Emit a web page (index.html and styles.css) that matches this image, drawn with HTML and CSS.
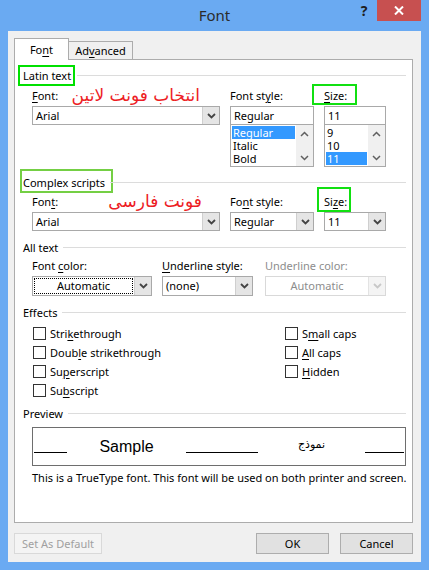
FILE: index.html
```html
<!DOCTYPE html>
<html lang="en">
<head>
    <meta charset="UTF-8">
    <title>Font</title>
    <link rel="stylesheet" href="styles.css">
</head>
<body>
<div class="window">
    <div class="titlebar">
        <span></span>
        <span class="title">Font</span>
        <div class="controls">
            <span class="help">?</span>
            <span class="close">
                <svg width="10" height="9" viewBox="0 0 10 9"><path d="M1 0.5l8 8M9 0.5l-8 8" stroke="#fff" stroke-width="2"/></svg>
            </span>
        </div>
    </div>

    <div class="client">
        <div class="tabs">
            <div class="tab active">Fo<u>n</u>t</div>
            <div class="tab">Ad<u>v</u>anced</div>
        </div>

        <div class="panel">
            <!-- Latin text -->
            <div class="group-head head-latin">
                <span class="mark mark-latin">Latin text</span><span class="rule"></span>
            </div>
            <div class="fields fields-latin">
                <div class="field">
                    <div class="label"><span><u>F</u>ont:</span><span class="note note-latin">انتخاب فونت لاتین</span></div>
                    <div class="combo">
                        <span class="value">Arial</span>
                        <span class="drop"><svg width="9" height="6" viewBox="0 0 9 6"><path d="M1 1l3.5 3.5L8 1" fill="none" stroke="#444" stroke-width="1.8"/></svg></span>
                    </div>
                </div>
                <div class="field">
                    <div class="label"><span>Font st<u>y</u>le:</span></div>
                    <div class="textbox">Regular</div>
                    <div class="listbox">
                        <div class="items">
                            <div class="item selected">Regular</div>
                            <div class="item">Italic</div>
                            <div class="item">Bold</div>
                        </div>
                        <div class="scrollbar">
                            <svg width="9" height="6" viewBox="0 0 9 6"><path d="M1 5l3.5-3.5L8 5" fill="none" stroke="#606060" stroke-width="1.5"/></svg>
                            <svg width="9" height="6" viewBox="0 0 9 6"><path d="M1 1l3.5 3.5L8 1" fill="none" stroke="#606060" stroke-width="1.5"/></svg>
                        </div>
                    </div>
                </div>
                <div class="field">
                    <div class="label"><span class="mark mark-size1"><u>S</u>ize:</span></div>
                    <div class="textbox">11</div>
                    <div class="listbox">
                        <div class="items">
                            <div class="item">9</div>
                            <div class="item">10</div>
                            <div class="item selected">11</div>
                        </div>
                        <div class="scrollbar">
                            <svg width="9" height="6" viewBox="0 0 9 6"><path d="M1 5l3.5-3.5L8 5" fill="none" stroke="#606060" stroke-width="1.5"/></svg>
                            <svg width="9" height="6" viewBox="0 0 9 6"><path d="M1 1l3.5 3.5L8 1" fill="none" stroke="#606060" stroke-width="1.5"/></svg>
                        </div>
                    </div>
                </div>
            </div>

            <!-- Complex scripts -->
            <div class="group-head head-complex">
                <span class="mark mark-complex">Complex scripts</span><span class="rule"></span>
            </div>
            <div class="fields fields-complex">
                <div class="field">
                    <div class="label"><span>Fon<u>t</u>:</span><span class="note note-complex">فونت فارسی</span></div>
                    <div class="combo">
                        <span class="value">Arial</span>
                        <span class="drop"><svg width="9" height="6" viewBox="0 0 9 6"><path d="M1 1l3.5 3.5L8 1" fill="none" stroke="#444" stroke-width="1.8"/></svg></span>
                    </div>
                </div>
                <div class="field">
                    <div class="label"><span>Fo<u>n</u>t style:</span></div>
                    <div class="combo">
                        <span class="value">Regular</span>
                        <span class="drop"><svg width="9" height="6" viewBox="0 0 9 6"><path d="M1 1l3.5 3.5L8 1" fill="none" stroke="#444" stroke-width="1.8"/></svg></span>
                    </div>
                </div>
                <div class="field">
                    <div class="label"><span class="mark mark-size2">Si<u>z</u>e:</span></div>
                    <div class="combo">
                        <span class="value">11</span>
                        <span class="drop"><svg width="9" height="6" viewBox="0 0 9 6"><path d="M1 1l3.5 3.5L8 1" fill="none" stroke="#444" stroke-width="1.8"/></svg></span>
                    </div>
                </div>
            </div>

            <!-- All text -->
            <div class="group-head head-all">
                <span>All text</span><span class="rule"></span>
            </div>
            <div class="fields fields-all">
                <div class="field">
                    <div class="label"><span>Font <u>c</u>olor:</span></div>
                    <div class="combo combo-color">
                        <span class="value focus">Automatic</span>
                        <span class="drop"><svg width="9" height="6" viewBox="0 0 9 6"><path d="M1 1l3.5 3.5L8 1" fill="none" stroke="#444" stroke-width="1.8"/></svg></span>
                    </div>
                </div>
                <div class="field">
                    <div class="label"><span><u>U</u>nderline style:</span></div>
                    <div class="combo combo-uline">
                        <span class="value">(none)</span>
                        <span class="drop"><svg width="9" height="6" viewBox="0 0 9 6"><path d="M1 1l3.5 3.5L8 1" fill="none" stroke="#444" stroke-width="1.8"/></svg></span>
                    </div>
                </div>
                <div class="field">
                    <div class="label disabled"><span>Underline color:</span></div>
                    <div class="combo combo-disabled">
                        <span class="value center">Automatic</span>
                        <span class="drop"><svg width="9" height="6" viewBox="0 0 9 6"><path d="M1 1l3.5 3.5L8 1" fill="none" stroke="#c8c8c8" stroke-width="1.8"/></svg></span>
                    </div>
                </div>
            </div>

            <!-- Effects -->
            <div class="group-head head-effects">
                <span>Effects</span><span class="rule"></span>
            </div>
            <div class="effects">
                <label class="check"><span class="box"></span><span>Stri<u>k</u>ethrough</span></label>
                <label class="check"><span class="box"></span><span>Doub<u>l</u>e strikethrough</span></label>
                <label class="check"><span class="box"></span><span>Su<u>p</u>erscript</span></label>
                <label class="check"><span class="box"></span><span>Su<u>b</u>script</span></label>
                <label class="check"><span class="box"></span><span>S<u>m</u>all caps</span></label>
                <label class="check"><span class="box"></span><span><u>A</u>ll caps</span></label>
                <label class="check"><span class="box"></span><span><u>H</u>idden</span></label>
            </div>

            <!-- Preview -->
            <div class="group-head head-preview">
                <span>Preview</span><span class="rule"></span>
            </div>
            <div class="preview">
                <span class="blank b1"></span>
                <span class="sample">Sample</span>
                <span class="blank b2"></span>
                <span class="sample-ar">نموذج</span>
                <span class="blank b3"></span>
            </div>
            <div class="info">This is a TrueType font. This font will be used on both printer and screen.</div>
        </div>

        <div class="buttons">
            <button class="btn btn-default" disabled>Set As Default</button>
            <button class="btn btn-ok">OK</button>
            <button class="btn">Cancel</button>
        </div>
    </div>
</div>
</body>
</html>
```

FILE: styles.css
```css
* {
    box-sizing: border-box;
}

body {
    margin: 0;
    font-family: "Noto Sans", sans-serif;
    font-size: 11px;
    color: #000;
}

u {
    text-decoration-thickness: 1px;
    text-underline-offset: 2px;
}

.window {
    width: 429px;
    height: 570px;
    background: #6aaaf2;
    padding: 0 8px 8px;
    display: flex;
    flex-direction: column;
}

/* title bar */
.titlebar {
    height: 31px;
    display: grid;
    grid-template-columns: 1fr auto 1fr;
}

.title {
    font-size: 15px;
    line-height: 30px;
    color: #2b2b2b;
}

.controls {
    justify-self: end;
    display: flex;
    height: 21px;
}

.help {
    width: 26px;
    text-align: center;
    font-weight: bold;
    font-size: 14px;
    line-height: 22px;
    color: #1e1e1e;
}

.close {
    width: 44px;
    background: #c75050;
    display: flex;
    align-items: center;
    justify-content: center;
}

/* client area */
.client {
    flex: 1;
    background: #f0f0f0;
    padding: 7px 8px 0 6px;
}

.tabs {
    display: flex;
    align-items: flex-end;
    height: 21px;
}

.tab {
    width: 64px;
    height: 18px;
    border: 1px solid #acacac;
    border-left: none;
    border-bottom: none;
    text-align: center;
    line-height: 17px;
}

.tab.active {
    width: 55px;
    height: 22px;
    line-height: 21px;
    border-left: 1px solid #acacac;
    background: #fff;
    margin-bottom: -1px;
    position: relative;
    z-index: 1;
}

.panel {
    height: 464px;
    background: #fff;
    border: 1px solid #acacac;
    padding: 0 6px 0 8px;
}

/* group headings */
.group-head {
    display: flex;
    align-items: center;
    height: 15px;
    line-height: 15px;
}

.rule {
    flex: 1;
    border-top: 1px solid #dcdcdc;
    margin-left: 5px;
}

.head-latin { margin-top: 8px; }
.head-complex { margin-top: 8px; }
.head-all { margin-top: 9px; }
.head-effects { margin-top: 9px; }
.head-preview { margin-top: 6px; }

/* green annotation boxes */
.mark {
    display: inline-block;
    border: 2px solid #00e000;
    line-height: 15px;
}

.mark-latin {
    padding: 1px 2px 1px 3px;
    margin: -3px -3px -3px -5px;
}

.mark-complex {
    border-color: #74cf44;
    padding: 4px 6px 1px 1px;
    margin: -6px -8px -3px -3px;
}

.mark-size1 {
    border-color: #11e011;
    padding: 2px 8px 0 10px;
    margin: -4px -10px -2px -12px;
}

.mark-size2 {
    border-color: #11e011;
    padding: 5px 2px 1px 5px;
    margin: -7px -4px -3px -7px;
}

/* red annotations */
.note {
    margin-left: auto;
    color: #ed1c24;
    font-family: "DejaVu Sans", sans-serif;
    font-size: 17px;
    line-height: 15px;
    direction: rtl;
}

.note-latin { margin-right: 30px; }
.note-complex { margin-right: 28px; }

/* field grids */
.fields {
    display: grid;
    grid-template-columns: 198px 94px 62px;
    margin-left: 9px;
}

.fields-latin { margin-top: 5px; }
.fields-complex { margin-top: 4px; }
.fields-all {
    margin-top: 3px;
    grid-template-columns: 130px 103px 121px;
}

.field > .combo,
.field > .textbox,
.field > .listbox {
    width: 100%;
}

.fields-latin .field:first-child .combo,
.fields-complex .field:first-child .combo {
    width: 188px;
}

.fields-latin .field:nth-child(2) > *,
.fields-complex .field:nth-child(2) > * {
    width: 84px;
}

.label {
    display: flex;
    height: 15px;
    line-height: 15px;
    margin-bottom: 3px;
    white-space: nowrap;
}

.label.disabled {
    color: #8d8d8d;
}

.combo {
    display: flex;
    height: 19px;
    border: 1px solid #a9a9a9;
    background: #fff;
    line-height: 17px;
}

.fields-all .combo {
    height: 20px;
    line-height: 18px;
}

.combo-color { width: 120px !important; }
.combo-uline { width: 91px !important; }

.value {
    flex: 1;
    padding-left: 3px;
    white-space: nowrap;
}

.value.focus {
    margin: 1px;
    outline: 1px dotted #000;
    outline-offset: -1px;
    line-height: 16px;
    text-align: center;
    padding-left: 0;
}

.value.center {
    text-align: center;
    padding-left: 0;
}

.drop {
    width: 17px;
    background: #e5e5e5;
    border-left: 1px solid #cfcfcf;
    display: flex;
    align-items: center;
    justify-content: center;
}

.combo-disabled {
    border-color: #d9d9d9;
    color: #8d8d8d;
}

.combo-disabled .drop {
    background: #f4f4f4;
    border-left-color: #e3e3e3;
}

.textbox {
    height: 19px;
    border: 1px solid #a9a9a9;
    padding-left: 3px;
    line-height: 17px;
}

.listbox {
    display: flex;
    height: 42px;
    border: 1px solid #a9a9a9;
    border-top: none;
}

.items {
    flex: 1;
    padding: 1px 1px 0;
}

.item {
    height: 13px;
    line-height: 13px;
    padding-left: 1px;
}

.item.selected {
    background: #3399ff;
    color: #fff;
}

.scrollbar {
    width: 17px;
    background: #f0f0f0;
    display: flex;
    flex-direction: column;
    justify-content: space-between;
    align-items: center;
    padding: 6px 0 5px;
}

/* effects */
.effects {
    display: grid;
    grid-template-columns: 252px auto;
    grid-template-rows: repeat(4, 19px);
    grid-auto-flow: column;
    margin: 4px 0 0 10px;
}

.check {
    display: flex;
    align-items: center;
    gap: 4px;
}

.box {
    width: 13px;
    height: 13px;
    border: 1px solid #333;
    background: #fff;
}

/* preview */
.preview {
    display: flex;
    align-items: flex-end;
    width: 374px;
    height: 39px;
    margin: 6px 0 0 9px;
    border: 1px solid #6e6e6e;
    padding: 0 0 12px 1px;
}

.blank {
    height: 10px;
    border-bottom: 1px solid #000;
}

.b1 { width: 33px; }
.b2 { width: 72px; }
.b3 { width: 39px; }

.sample {
    width: 119px;
    text-align: center;
    font-family: "Liberation Sans", Arial, sans-serif;
    font-size: 16px;
    line-height: 16px;
    margin-bottom: -2px;
}

.sample-ar {
    width: 107px;
    text-align: center;
    font-family: "DejaVu Sans", sans-serif;
    font-size: 11px;
    line-height: 14px;
    margin-bottom: 1px;
}

.info {
    margin: 4px 0 0 9px;
    line-height: 15px;
    white-space: nowrap;
}

/* buttons */
.buttons {
    display: flex;
    gap: 11px;
    margin-top: 10px;
}

.btn {
    width: 73px;
    height: 21px;
    border: 1px solid #adadad;
    background: #e1e1e1;
    font-family: inherit;
    font-size: 11px;
    padding: 0;
}

.btn-default {
    width: 88px;
    margin-right: auto;
    background: #f4f4f4;
    border-color: #d9d9d9;
    color: #a0a0a0;
}
```
